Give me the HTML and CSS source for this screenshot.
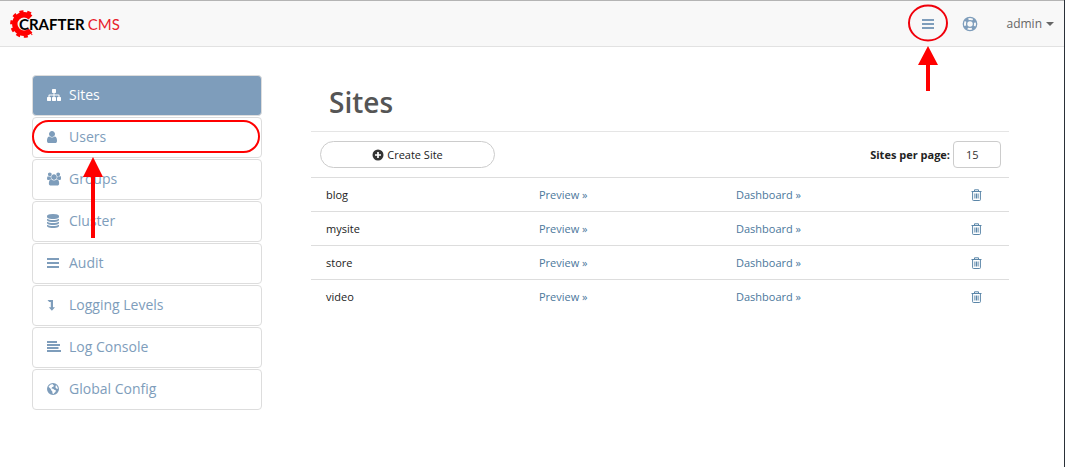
FILE: index.html
```html
<!DOCTYPE html>
<html lang="en">
<head>
<meta charset="utf-8">
<title>Crafter CMS - Sites</title>
<link rel="stylesheet" href="styles.css">
</head>
<body>
<header class="topbar">
  <a class="logo" href="#" aria-label="Crafter CMS">
    <svg class="logo-gear" viewBox="0 0 28 28" aria-hidden="true">
      <path d="M20.500 7.500A9.200 9.200 0 1 0 20.500 20.500" fill="none" stroke="#f00" stroke-width="5.400"/>
      <path d="M21.800 4.300A12.500 12.500 0 1 0 21.800 23.700" fill="none" stroke="#f00" stroke-width="2.600" stroke-dasharray="4 3.700" stroke-dashoffset="-1.200"/>
    </svg>
    <span class="logo-text"><span>CRAFTER</span><span class="logo-cms">CMS</span></span>
  </a>
  <nav class="tools">
    <button class="tool" type="button" aria-label="Main menu">
      <svg class="tool-icon" viewBox="0 0 14 14"><path d="M1 2h12v2H1zM1 6h12v2H1zM1 10h12v2H1z" fill="currentColor"/></svg>
      <svg class="mark-menu" viewBox="0 0 42 90" aria-hidden="true">
        <ellipse cx="21" cy="19" rx="19" ry="17.500" fill="none" stroke="#f0000b" stroke-width="2"/>
        <path d="M21 42L31 61H23V87H19V61H11z" fill="#f00"/>
      </svg>
    </button>
    <button class="tool" type="button" aria-label="Help">
      <svg class="help-icon" viewBox="0 0 16 16" fill="none" stroke="currentColor">
        <circle cx="8" cy="8" r="6.700" stroke-width="1.300"/><circle cx="8" cy="8" r="3.400" stroke-width="1.300"/>
        <circle cx="8" cy="8" r="5" stroke-width="3.400" stroke-dasharray="3.400 4.454" stroke-dashoffset="-2.230"/>
      </svg>
    </button>
    <button class="account" type="button">admin <span class="caret"></span></button>
  </nav>
</header>
<div class="page">
  <nav class="sidebar">
    <a class="item active" href="#"><svg class="icon" viewBox="0 0 1792 1792"><path d="M1792 1248v320q0 40-28 68t-68 28h-320q-40 0-68-28t-28-68v-320q0-40 28-68t68-28h96v-192h-512v192h96q40 0 68 28t28 68v320q0 40-28 68t-68 28h-320q-40 0-68-28t-28-68v-320q0-40 28-68t68-28h96v-192h-512v192h96q40 0 68 28t28 68v320q0 40-28 68t-68 28h-320q-40 0-68-28t-28-68v-320q0-40 28-68t68-28h96v-192q0-52 38-90t90-38h512v-192h-96q-40 0-68-28t-28-68v-320q0-40 28-68t68-28h320q40 0 68 28t28 68v320q0 40-28 68t-68 28h-96v192h512q52 0 90 38t38 90v192h96q40 0 68 28t28 68z"/></svg>Sites</a>
    <a class="item" href="#"><svg class="icon" viewBox="256 0 1792 1792"><path d="M1536 1399q0 109-62.500 187t-150.500 78h-854q-88 0-150.500-78t-62.500-187q0-85 8.500-160.500t31.500-152 58.500-131 94-89 134.500-34.500q131 128 313 128t313-128q76 0 134.500 34.500t94 89 58.500 131 31.500 152 8.500 160.500zm-256-887q0 159-112.500 271.500t-271.500 112.500-271.500-112.500-112.500-271.500 112.500-271.500 271.500-112.500 271.500 112.500 112.500 271.500z"/></svg>Users
      <svg class="mark-users" viewBox="0 0 230 120" aria-hidden="true">
        <rect x="1" y="1" width="226" height="31" rx="15.500" fill="none" stroke="#f00" stroke-width="2"/>
        <path d="M61 37L71 57H63V118H59V57H51z" fill="#f00"/>
      </svg>
    </a>
    <a class="item" href="#"><svg class="icon" viewBox="0 0 1920 1792"><path d="M593 896q-162 5-265 128h-134q-82 0-138-40.500t-56-118.500q0-353 124-353 6 0 43.500 21t97.500 42.500 119 21.500q67 0 133-23-5 37-5 66 0 159 93 287zm1071 637q0 120-73 189.500t-194 69.500h-874q-121 0-194-69.500t-73-189.500q0-53 3.500-103.500t14-109 26.500-108.500 43-97.500 62-81 85.500-53.500 111.500-20q10 0 43 21.500t73 48 107 48 135 21.500 135-21.500 107-48 73-48 43-21.500q61 0 111.500 20t85.500 53.500 62 81 43 97.500 26.500 108.500 14 109 3.500 103.500zm-1024-1277q0 106-75 181t-181 75-181-75-75-181 75-181 181-75 181 75 75 181zm704 384q0 159-112.500 271.500t-271.500 112.500-271.500-112.500-112.500-271.500 112.500-271.500 271.500-112.500 271.500 112.500 112.500 271.500zm576 225q0 78-56 118.500t-138 40.500h-134q-103-123-265-128 93-128 93-287 0-29-5-66 66 23 133 23 59 0 119-21.500t97.500-42.500 43.500-21q124 0 124 353zm-128-609q0 106-75 181t-181 75-181-75-75-181 75-181 181-75 181 75 75 181z"/></svg>Groups</a>
    <a class="item" href="#"><svg class="icon" viewBox="128 0 1792 1792"><path d="M896 768q237 0 443-43t325-127v170q0 69-103 128t-280 93.500-385 34.500-385-34.500-280-93.500-103-128v-170q119 84 325 127t443 43zm0 768q237 0 443-43t325-127v170q0 69-103 128t-280 93.500-385 34.500-385-34.500-280-93.500-103-128v-170q119 84 325 127t443 43zm0-384q237 0 443-43t325-127v170q0 69-103 128t-280 93.500-385 34.500-385-34.500-280-93.500-103-128v-170q119 84 325 127t443 43zm0-1152q208 0 385 34.500t280 93.500 103 128v128q0 69-103 128t-280 93.500-385 34.500-385-34.500-280-93.500-103-128v-128q0-69 103-128t280-93.500 385-34.500z"/></svg>Cluster</a>
    <a class="item" href="#"><svg class="icon" viewBox="0 0 14 14"><path d="M0 2h12v2H0zM0 6h12v2H0zM0 10h12v2H0z"/></svg>Audit</a>
    <a class="item" href="#"><svg class="icon" viewBox="0 0 14 14"><path d="M.5 2H6v7.200h2L4.900 12.800 1.800 9.200h2V4H2.200z"/></svg>Logging Levels</a>
    <a class="item" href="#"><svg class="icon" viewBox="0 0 14 14"><path d="M0 1h10v2H0zM0 4h13v2H0zM0 7h11.500v2H0zM0 10h14v2H0z"/></svg>Log Console</a>
    <a class="item" href="#"><svg class="icon" viewBox="0 0 14 14"><path fill-rule="evenodd" d="M6 1a6 6 0 1 0 0 12A6 6 0 0 0 6 1zM6.200 2.100L5.600 3l1.600.6-.9 1.200-1.300.4-.5 1.300 1.600.2 1.200 1 1.700.7-.6 1.600-1.200 1L6.600 12.100 5.500 11.600 5.300 9.400 4.200 8.200 3.800 7 2 5.300 1.500 4.800A5 5 0 0 1 6.200 2.100zM9 3l1.500 1.900.3 2-1.100-.2L8.500 5.400 8.600 4.200z"/></svg>Global Config</a>
  </nav>
  <main class="content">
    <h1 class="title">Sites</h1>
    <div class="toolbar">
      <button class="create" type="button">
        <svg class="plus" viewBox="0 0 12 12"><circle cx="6" cy="6" r="5.500" fill="#333"/><path d="M6 3v6M3 6h6" stroke="#fff" stroke-width="1.700"/></svg>
        Create Site
      </button>
      <div class="perpage">
        <label for="perpage">Sites per page:</label>
        <input id="perpage" class="count" type="text" value="15">
      </div>
    </div>
    <table class="sites">
      <tbody>
        <tr><td class="name">blog</td><td class="preview"><a href="#">Preview »</a></td><td><a href="#">Dashboard »</a></td><td class="actions"><button class="delete" type="button" aria-label="Delete blog"><svg class="trash"><use href="#trash"/></svg></button></td></tr>
        <tr><td class="name">mysite</td><td class="preview"><a href="#">Preview »</a></td><td><a href="#">Dashboard »</a></td><td class="actions"><button class="delete" type="button" aria-label="Delete mysite"><svg class="trash"><use href="#trash"/></svg></button></td></tr>
        <tr><td class="name">store</td><td class="preview"><a href="#">Preview »</a></td><td><a href="#">Dashboard »</a></td><td class="actions"><button class="delete" type="button" aria-label="Delete store"><svg class="trash"><use href="#trash"/></svg></button></td></tr>
        <tr><td class="name">video</td><td class="preview"><a href="#">Preview »</a></td><td><a href="#">Dashboard »</a></td><td class="actions"><button class="delete" type="button" aria-label="Delete video"><svg class="trash"><use href="#trash"/></svg></button></td></tr>
      </tbody>
    </table>
  </main>
</div>
<svg class="symbols" aria-hidden="true">
  <symbol id="trash" viewBox="0 0 11 12"><path d="M.5 2.500h10M3.500 2.500V.8h4v1.700M1.600 2.500v8.200q0 .8.800.8h6.200q.8 0 .8-.8V2.500M3.900 4.500v5M5.500 4.500v5M7.100 4.500v5" fill="none" stroke="currentColor"/></symbol>
</svg>
</body>
</html>
```
FILE: styles.css
```css
* { box-sizing: border-box; }

body {
  margin: 0;
  min-height: 100vh;
  border-right: 1px solid #2a3038;
  background: #fff;
  color: #222;
  font: 11px/20px "Open Sans", sans-serif;
}

a { color: #4b779c; text-decoration: none; }

button {
  padding: 0;
  border: 0;
  background: none;
  color: inherit;
  font: inherit;
}

.symbols { position: absolute; width: 0; height: 0; }

.topbar {
  display: flex;
  align-items: center;
  justify-content: space-between;
  height: 47px;
  padding: 0 10px;
  border-top: 1px solid #b4b4b4;
  border-bottom: 1px solid #e2e2e2;
  background: #f8f8f8;
}

.logo { display: flex; align-items: center; }
.logo-gear { width: 28px; height: 28px; }
.logo-text {
  display: flex;
  gap: 3px;
  margin-left: -19px;
  color: #000;
  font: 700 15px/20px Lato, sans-serif;
}
.logo-cms { color: #e8202a; font-weight: 400; }

.tools { display: flex; align-items: center; }
.tool {
  position: relative;
  display: flex;
  justify-content: center;
  width: 42px;
  color: #7e9dbb;
}
.tool-icon { width: 14px; height: 14px; }
.help-icon { width: 16px; height: 16px; }
.account {
  display: flex;
  align-items: center;
  gap: 4px;
  margin-left: 15px;
  color: #666;
  font-size: 12px;
}
.caret {
  border: 4px solid transparent;
  border-top-color: #666;
  border-bottom: 0;
}

.mark-menu {
  position: absolute;
  top: -13px;
  left: 0;
  width: 42px;
  height: 90px;
}
.mark-users {
  position: absolute;
  z-index: 1;
  top: 2px;
  left: -1px;
  width: 230px;
  height: 120px;
}

.page {
  display: flex;
  gap: 49px;
  padding: 28px 55px 28px 32px;
}

.sidebar {
  display: flex;
  flex: 0 0 230px;
  flex-direction: column;
  gap: 1px;
}
.item {
  position: relative;
  display: flex;
  align-items: center;
  gap: 8px;
  padding: 9px 14px 10px;
  border: 1px solid #ddd;
  border-radius: 4px;
  color: #7e9dbb;
  font-size: 14px;
}
.active { background: #7e9dbb; color: #fff; }
.icon { width: 14px; height: 14px; fill: currentColor; }

.content { flex: 1; min-width: 0; }
.title {
  margin: 0;
  padding: 7px 18px 9px;
  border-bottom: 1px solid #e5e5e5;
  color: #555;
  font-size: 28px;
  font-weight: 600;
  line-height: 40px;
}

.toolbar {
  display: flex;
  align-items: center;
  justify-content: space-between;
  padding: 9px 8px 9px 9px;
}
.create {
  display: flex;
  align-items: center;
  justify-content: center;
  gap: 3px;
  width: 175px;
  height: 27px;
  border: 1px solid #ccc;
  border-radius: 14px;
}
.plus { width: 12px; height: 12px; }
.perpage {
  display: flex;
  align-items: center;
  gap: 3px;
  font-weight: 700;
}
.count {
  width: 48px;
  height: 27px;
  padding: 0 12px;
  border: 1px solid #ccc;
  border-radius: 4px;
  color: #333;
  font: inherit;
  font-weight: 400;
}

.sites {
  width: 100%;
  border-collapse: collapse;
  table-layout: fixed;
}
.sites td {
  height: 34px;
  padding: 0 15px;
  border-top: 1px solid #ddd;
}
.name { width: 213px; }
.preview { width: 197px; }
.sites .actions { padding-right: 27px; }
.delete { display: block; margin-left: auto; color: #5b86a8; }
.trash { display: block; width: 11px; height: 12px; }
```
